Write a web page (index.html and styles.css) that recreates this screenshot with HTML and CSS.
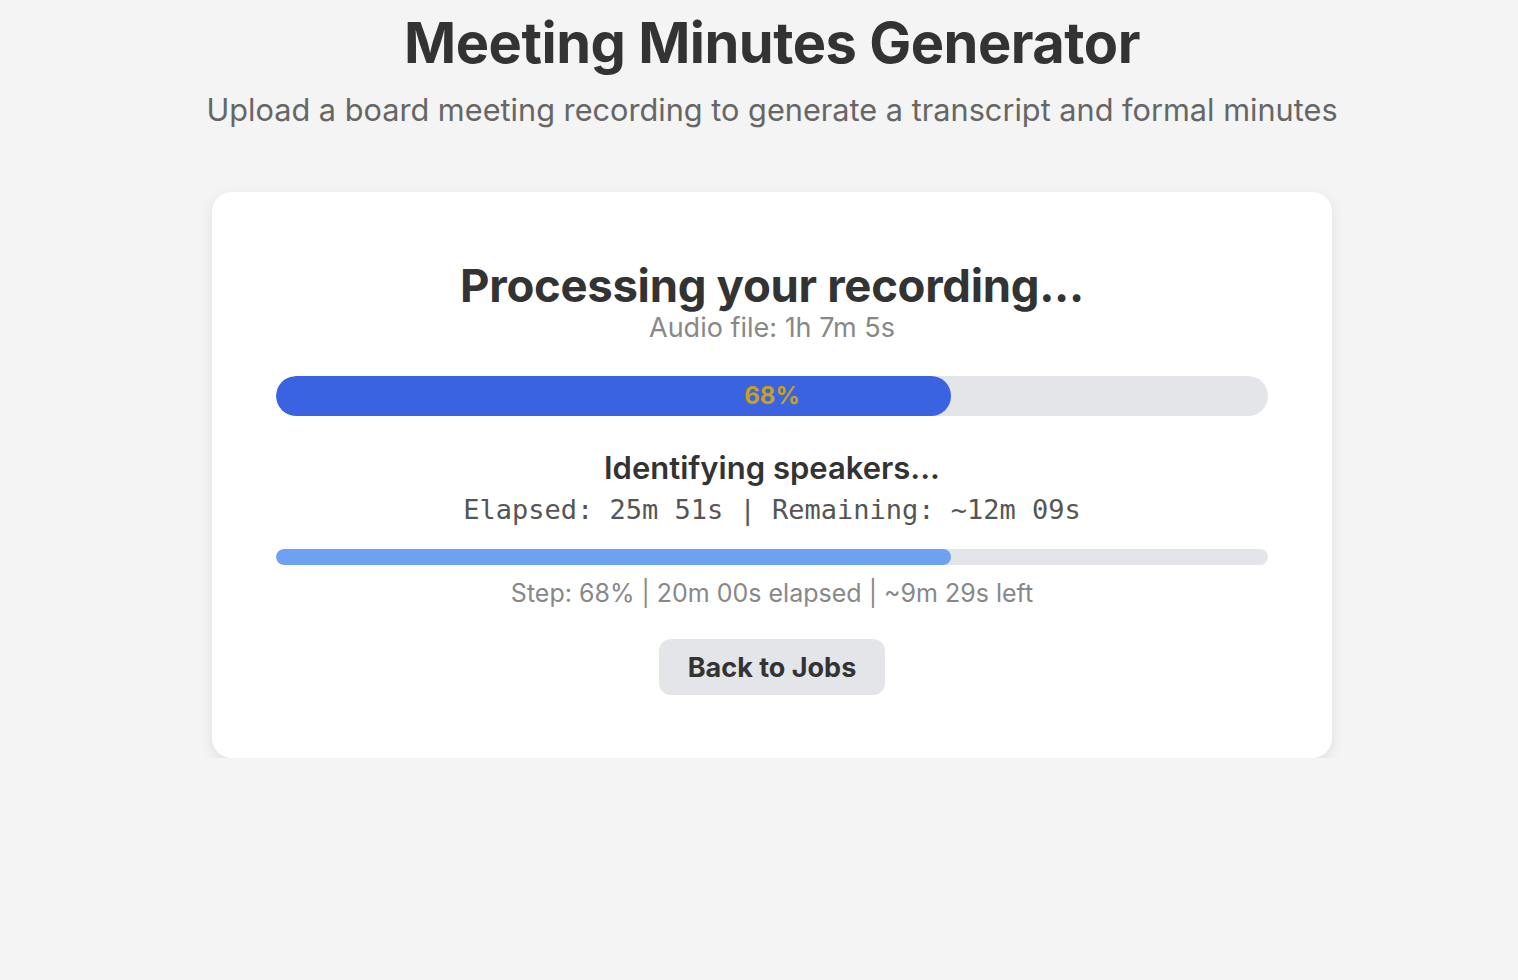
FILE: index.html
```html
<!DOCTYPE html>
<html lang="en">
  <head>
    <meta charset="UTF-8" />
    <meta name="viewport" content="width=device-width, initial-scale=1.0" />
    <title>Meeting Minutes Generator</title>
    <link rel="stylesheet" href="styles.css">
  </head>
  <body>
    <header class="header">
      <h1>Meeting Minutes Generator</h1>
      <p class="subtitle">
        Upload a board meeting recording to generate a transcript and formal minutes
      </p>
    </header>

    <div class="card">
      <h2>Processing your recording...</h2>
      <p class="audio-info">Audio file: 1h 7m 5s</p>

      <div class="progress-main">
        <div class="progress-main-fill" style="width: 68%"></div>
        <span class="progress-main-label">68%</span>
      </div>

      <h3 class="step-name">Identifying speakers...</h3>
      <p class="timing">Elapsed: 25m 51s | Remaining: ~12m 09s</p>

      <div class="progress-step">
        <div class="progress-step-fill" style="width: 68%"></div>
      </div>
      <p class="step-info">Step: 68% | 20m 00s elapsed | ~9m 29s left</p>

      <button class="back-btn">Back to Jobs</button>
    </div>
  </body>
</html>
```

FILE: styles.css
```css
body {
  margin: 0;
  padding: 0 20px 0 46px;
  font-family: Inter, "Noto Sans", sans-serif;
  background: #f4f4f4;
  color: #333;
}

.header {
  text-align: center;
  padding-top: 8px;
}

h1 {
  font-size: 56px;
  font-weight: 700;
  letter-spacing: -0.5px;
  margin: 0;
  line-height: 70px;
}

.subtitle {
  font-size: 30.7px;
  color: #666;
  margin: 12px 0 0;
  line-height: 40px;
}

.card {
  background: white;
  width: 992px;
  margin: 62px auto 0;
  padding: 66px 64px 63px;
  border-radius: 20px;
  box-shadow: 0 4px 14px rgba(0, 0, 0, 0.09);
  text-align: center;
}

h2 {
  font-size: 45.5px;
  font-weight: 700;
  letter-spacing: -0.3px;
  margin: 0;
  line-height: 56px;
}

.audio-info {
  font-size: 27px;
  color: #888;
  margin: 0;
  line-height: 28px;
}

.progress-main {
  position: relative;
  height: 40px;
  margin-top: 34px;
  background: #e4e5e9;
  border-radius: 20px;
  overflow: hidden;
}

.progress-main-fill {
  height: 100%;
  background: #3a63e2;
  border-radius: 20px;
}

.progress-main-label {
  position: absolute;
  left: 0;
  right: 0;
  top: 0;
  line-height: 40px;
  font-size: 24px;
  font-weight: 700;
  color: #c9a01c;
}

.step-name {
  font-size: 31px;
  font-weight: 600;
  margin: 32px 0 0;
  line-height: 40px;
}

.timing {
  font-family: "DejaVu Sans Mono", "Liberation Mono", monospace;
  font-size: 27px;
  color: #555;
  margin: 5px 0 0;
  line-height: 34px;
}

.progress-step {
  height: 16px;
  margin-top: 22px;
  background: #e4e5e9;
  border-radius: 8px;
  overflow: hidden;
}

.progress-step-fill {
  height: 100%;
  background: #6fa1f2;
  border-radius: 8px;
}

.step-info {
  font-size: 25px;
  color: #888;
  margin: 12px 0 0;
  line-height: 32px;
}

.back-btn {
  display: block;
  margin: 30px auto 0;
  background: #e4e5e9;
  color: #333;
  border: none;
  width: 226px;
  height: 56px;
  border-radius: 12px;
  font-family: Inter, "Noto Sans", sans-serif;
  font-size: 27px;
  font-weight: 700;
  cursor: pointer;
}
```
